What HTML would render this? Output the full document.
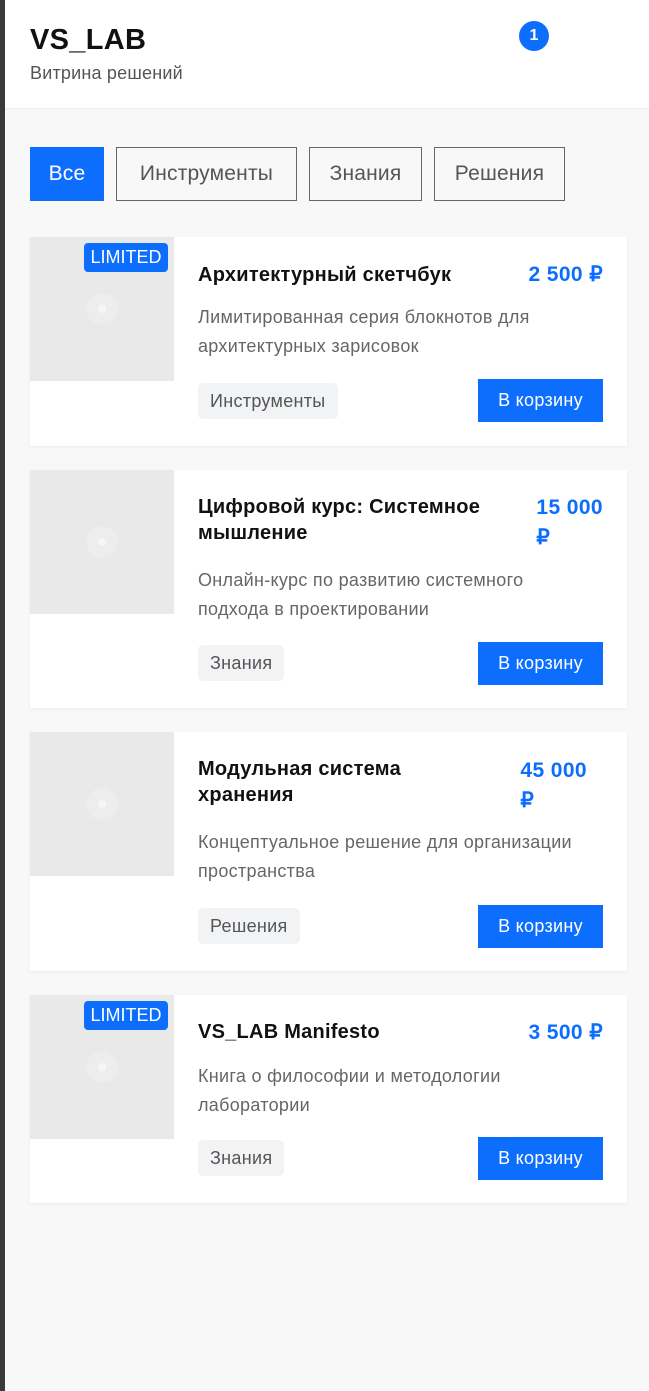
<!DOCTYPE html>
<html><head><meta charset="utf-8"><style>
*{margin:0;padding:0;box-sizing:border-box}
body{width:649px;height:1391px;background:#f8f8f8;font-family:"Liberation Sans",sans-serif;position:relative;overflow:hidden}
.strip{position:absolute;left:0;top:0;width:5px;height:1391px;background:#3a3a3a}
.hdr{position:absolute;left:5px;top:0;width:644px;height:109px;background:#fff;border-bottom:1px solid #eee}
.a{position:absolute;white-space:nowrap}
.f{position:absolute;top:147px;height:54px;border:1px solid #666;color:#555;font-size:21px;letter-spacing:.2px;display:flex;align-items:center;justify-content:center;background:transparent}
.card{position:absolute;left:30px;width:597px;background:#fff;box-shadow:0 1px 3px rgba(0,0,0,.06)}
.img{position:absolute;left:0;top:0;width:144px;height:144px;background:#e9e9e9}
.img i{position:absolute;left:56px;top:56px;width:32px;height:32px;border-radius:50%;background:#ededed}
.img i:after{content:"";position:absolute;left:12px;top:12px;width:8px;height:8px;border-radius:50%;background:#f6f6f6}
.lim{position:absolute;left:54px;top:6px;width:84px;height:29px;background:#0d6efd;color:#fff;border-radius:4px;font-size:18px;display:flex;align-items:center;justify-content:center}
.t{position:absolute;left:168px;font-size:20px;letter-spacing:.25px;font-weight:bold;color:#111;line-height:26px}
.p{position:absolute;right:24px;font-size:21px;letter-spacing:.4px;font-weight:bold;color:#0d6efd;line-height:30px;text-align:left}
.d{position:absolute;left:168px;font-size:18px;letter-spacing:.3px;color:#666;line-height:29px}
.tag{position:absolute;left:168px;height:36px;padding:0 12px;background:#f2f3f5;border-radius:5px;color:#555;font-size:18px;letter-spacing:.3px;display:flex;align-items:center}
.btn{position:absolute;left:448px;width:125px;height:43px;background:#0d6efd;color:#fff;font-size:18px;letter-spacing:.3px;display:flex;align-items:center;justify-content:center}
</style></head><body>
<div class="strip"></div>
<div class="hdr"></div>
<div class="a" style="left:30px;top:24px;font-size:29px;letter-spacing:.3px;font-weight:bold;color:#111">VS_LAB</div>
<div class="a" style="left:30px;top:63px;font-size:18px;letter-spacing:.2px;color:#555">Витрина решений</div>
<div class="a" style="left:519px;top:21px;width:30px;height:30px;border-radius:50%;background:#0d6efd;color:#fff;font-size:16px;font-weight:bold;text-align:center;line-height:30px">1</div>

<div class="f" style="left:30px;width:74px;background:#0d6efd;border-color:#0d6efd;color:#fff">Все</div>
<div class="f" style="left:116px;width:181px">Инструменты</div>
<div class="f" style="left:309px;width:113px">Знания</div>
<div class="f" style="left:434px;width:131px">Решения</div>

<div class="card" style="top:237px;height:209px">
<div class="img"><i></i></div><div class="lim">LIMITED</div>
<div class="t" style="top:25px">Архитектурный скетчбук</div>
<div class="p" style="top:23px">2 500 ₽</div>
<div class="d" style="top:66px">Лимитированная серия блокнотов для<br>архитектурных зарисовок</div>
<div class="tag" style="top:146px">Инструменты</div>
<div class="btn" style="top:142px">В корзину</div>
</div>

<div class="card" style="top:470px;height:238px">
<div class="img"><i></i></div>
<div class="t" style="top:24px">Цифровой курс: Системное<br>мышление</div>
<div class="p" style="top:23px">15 000<br>₽</div>
<div class="d" style="top:96px">Онлайн-курс по развитию системного<br>подхода в проектировании</div>
<div class="tag" style="top:175px">Знания</div>
<div class="btn" style="top:172px">В корзину</div>
</div>

<div class="card" style="top:732px;height:239px">
<div class="img"><i></i></div>
<div class="t" style="top:24px">Модульная система<br>хранения</div>
<div class="p" style="top:24px;right:40px">45 000<br>₽</div>
<div class="d" style="top:96px">Концептуальное решение для организации<br>пространства</div>
<div class="tag" style="top:176px">Решения</div>
<div class="btn" style="top:173px">В корзину</div>
</div>

<div class="card" style="top:995px;height:208px">
<div class="img"><i></i></div><div class="lim">LIMITED</div>
<div class="t" style="top:24px">VS_LAB Manifesto</div>
<div class="p" style="top:23px">3 500 ₽</div>
<div class="d" style="top:67px">Книга о философии и методологии<br>лаборатории</div>
<div class="tag" style="top:145px">Знания</div>
<div class="btn" style="top:142px">В корзину</div>
</div>
</body></html>
